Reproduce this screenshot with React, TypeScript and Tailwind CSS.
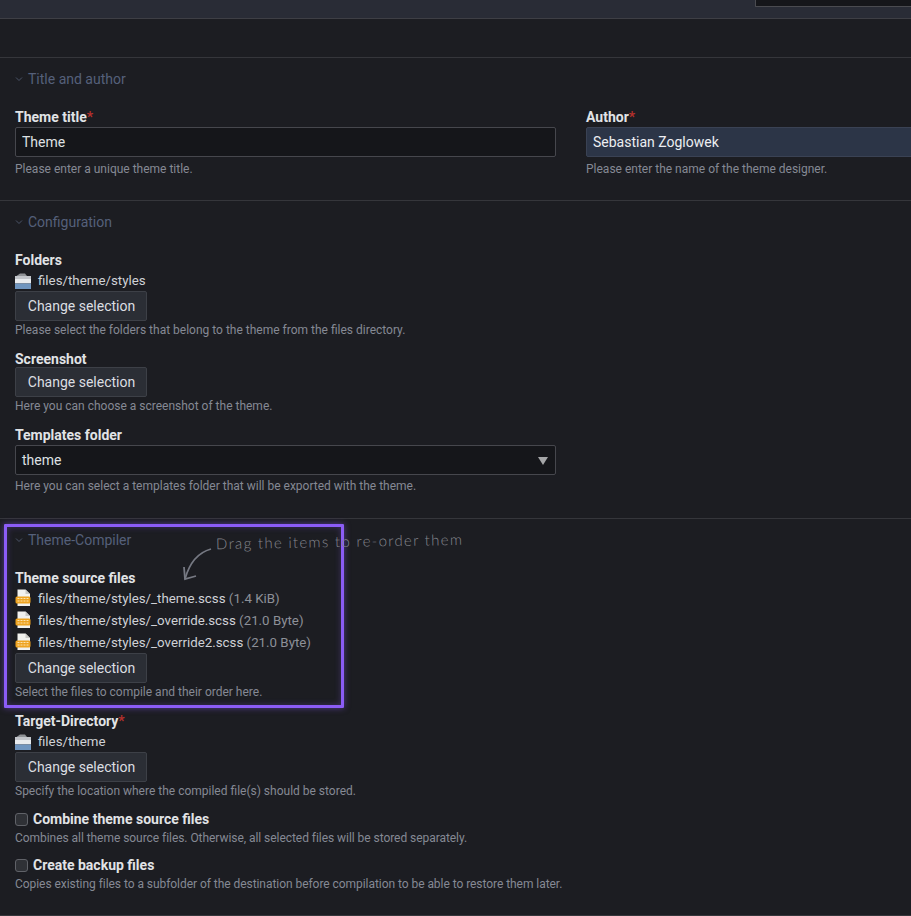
const FolderIcon = () => (
  <svg width="16" height="16" viewBox="0 0 16 16" className="shrink-0">
    <path d="M1.500 3 L5 0.500 H10 L12 3 Z" fill="#8f9296" />
    <path d="M0 3 H16 V6 H0 Z" fill="#c2c5ca" />
    <path d="M0 6 H16 V10.500 H0 Z" fill="#e8ebee" />
    <path d="M0 10.500 H16 V16 H0 Z" fill="#6f95bf" />
  </svg>
)

const ScssIcon = () => (
  <svg width="16" height="18" viewBox="0 0 16 18" className="shrink-0">
    <path d="M2.500 0.500 H10.500 L15 5 V17 H2.500 Z" fill="#f1f1ee" />
    <path d="M10.500 0.500 L15 5 H10.500 Z" fill="#c9c9c5" />
    <rect x="0.500" y="7.500" width="15" height="7" rx="1.500" fill="#eea320" />
    <path d="M2.500 9.500 H4.500 M5.500 9.500 H7.500 M8.500 9.500 H10.500 M11.500 9.500 H13.500 M2.500 12 H4.500 M5.500 12 H7.500 M8.500 12 H10.500 M11.500 12 H13.500" stroke="#fbe3b0" strokeWidth="1" />
  </svg>
)

const Legend = ({ title }: { title: string }) => (
  <div className="flex h-[20px] items-center gap-[5px] text-[14px] text-[#55607a]">
    <svg width="8" height="6" viewBox="0 0 8 6" fill="none" stroke="#4b5468" strokeWidth="1">
      <path d="M1 1.500 L4 4.500 L7 1.500" />
    </svg>
    <span>{title}</span>
  </div>
)

const Label = ({ children, required, h }: { children: React.ReactNode; required?: boolean; h?: string }) => (
  <div className={`text-[14px] font-bold text-[#e1e3e6] ${h ?? 'h-[20px] leading-[20px]'}`}>
    {children}
    {required && <span className="text-[#b3302c]">*</span>}
  </div>
)

const Help = ({ children, mt }: { children: React.ReactNode; mt?: string }) => (
  <p className={`h-[16px] text-[12px] leading-[18px] text-[#858994] ${mt ?? ''}`}>{children}</p>
)

const ChangeButton = () => (
  <button className="block h-[30px] w-[132px] rounded-[2px] border border-[#3d4047] bg-[#2b2e35] pl-px text-[14px] text-[#dcdee2]">
    Change selection
  </button>
)

const FileRow = ({ name, size, h }: { name: string; size?: string; h?: string }) => (
  <div className={`flex items-center gap-[7px] text-[13.3px] text-[#cfd1d6] ${h ?? 'h-[22px]'}`}>
    {size ? <ScssIcon /> : <FolderIcon />}
    <span className={size ? 'mt-[2px]' : 'mt-px'}>
      {name}
      {size && <span className="text-[#8d9098]"> ({size})</span>}
    </span>
  </div>
)

const CheckField = ({ title, help }: { title: string; help: string }) => (
  <div>
    <div className="flex h-[20px] items-center gap-[5px] text-[14px] font-bold text-[#e1e3e6]">
      <span className="h-[13px] w-[13px] rounded-[3px] border border-[#606268] bg-[#2f3136]" />
      {title}
    </div>
    <p className="h-[16px] text-[12px] leading-[18px] tracking-[-0.05px] text-[#858994]">{help}</p>
  </div>
)

export default function App() {
  return (
    <div className="relative h-[916px] w-[911px] overflow-hidden bg-[#1c1d22] font-['Roboto',sans-serif]">
      {/* top bar */}
      <div className="relative h-[19px] border-b border-[#3e3f45] bg-[#292c36]">
        <div className="absolute top-0 left-[755px] h-[7px] w-[156px] rounded-bl-[1px] border-b border-l border-[#4a4b50] bg-[#15161a]" />
      </div>

      <div className="h-[38px]" />

      {/* title and author */}
      <section className="h-[143px] border-t border-[#35363b] pt-[11px] pl-[15px]">
        <Legend title="Title and author" />
        <div className="mt-[18px] grid w-[1112px] grid-cols-2 gap-x-[30px]">
          <div>
            <Label required>Theme title</Label>
            <input
              readOnly
              value="Theme"
              className="block h-[30px] w-full rounded-[2px] border border-[#46474d] bg-[#15161a] px-[6px] font-['Roboto',sans-serif] text-[14px] text-[#dfe1e4] outline-none"
            />
            <Help mt="mt-[3px]">Please enter a unique theme title.</Help>
          </div>
          <div>
            <Label required>Author</Label>
            <input
              readOnly
              value="Sebastian Zoglowek"
              className="block h-[30px] w-full rounded-[2px] border border-[#3a4254] bg-[#2c3547] px-[6px] font-['Roboto',sans-serif] text-[14px] text-[#eceef2] outline-none"
            />
            <Help mt="mt-[3px]">Please enter the name of the theme designer.</Help>
          </div>
        </div>
      </section>

      {/* configuration */}
      <section className="h-[318px] border-t border-[#35363b] pt-[11px] pl-[15px]">
        <Legend title="Configuration" />
        <div className="mt-[18px]">
          <Label>Folders</Label>
          <FileRow name="files/theme/styles" h="h-[21px]" />
          <ChangeButton />
          <Help>Please select the folders that belong to the theme from the files directory.</Help>
        </div>
        <div className="mt-[14px]">
          <Label h="h-[16px] leading-[16px]">Screenshot</Label>
          <ChangeButton />
          <Help>Here you can choose a screenshot of the theme.</Help>
        </div>
        <div className="mt-[12px]">
          <Label>Templates folder</Label>
          <div className="relative h-[30px] w-[541px] rounded-[2px] border border-[#46474d] bg-[#15161a] px-[6px] text-[14px] leading-[28px] text-[#dfe1e4]">
            theme
            <span className="absolute top-[11px] right-[7px] h-0 w-0 border-x-[5px] border-t-[8px] border-x-transparent border-t-[#a5a6a8]" />
          </div>
          <Help mt="mt-[2px]">Here you can select a templates folder that will be exported with the theme.</Help>
        </div>
      </section>

      {/* theme compiler */}
      <section className="h-[398px] border-y border-[#35363b] pt-[11px] pl-[15px]">
        <Legend title="Theme-Compiler" />
        <div className="mt-[18px]">
          <Label h="h-[19px] leading-[20px]">Theme source files</Label>
          <FileRow name="files/theme/styles/_theme.scss" size="1.4 KiB" />
          <FileRow name="files/theme/styles/_override.scss" size="21.0 Byte" />
          <FileRow name="files/theme/styles/_override2.scss" size="21.0 Byte" />
          <ChangeButton />
          <Help>Select the files to compile and their order here.</Help>
        </div>
        <div className="mt-[12px]">
          <Label required>Target-Directory</Label>
          <FileRow name="files/theme" h="h-[21px]" />
          <ChangeButton />
          <Help>Specify the location where the compiled file(s) should be stored.</Help>
        </div>
        <div className="mt-[11px] flex flex-col gap-[10px]">
          <CheckField title="Combine theme source files" help="Combines all theme source files. Otherwise, all selected files will be stored separately." />
          <CheckField title="Create backup files" help="Copies existing files to a subfolder of the destination before compilation to be able to restore them later." />
        </div>
      </section>

      {/* highlight box and note drawn over the form */}
      <div className="absolute top-[524px] left-[4px] h-[184px] w-[340px] rounded-[1px] border-[3px] border-[#8b5cf6] shadow-[0_0_6px_rgba(139,92,246,0.5),inset_0_0_6px_rgba(139,92,246,0.3)]" />
      <svg width="34" height="36" viewBox="0 0 34 36" fill="none" stroke="#767983" strokeWidth="1.800" className="absolute top-[547px] left-[180px]">
        <path d="M31 2 C20 5 10 14 5 32" />
        <path d="M4 20 L5 32 L16 29" />
      </svg>
      <div className="absolute top-[530px] left-[216px] -rotate-1 font-['Lato',sans-serif] text-[15px] font-light tracking-[1.3px] text-[#85878e]">
        Drag the items to re-order them
      </div>
    </div>
  )
}
